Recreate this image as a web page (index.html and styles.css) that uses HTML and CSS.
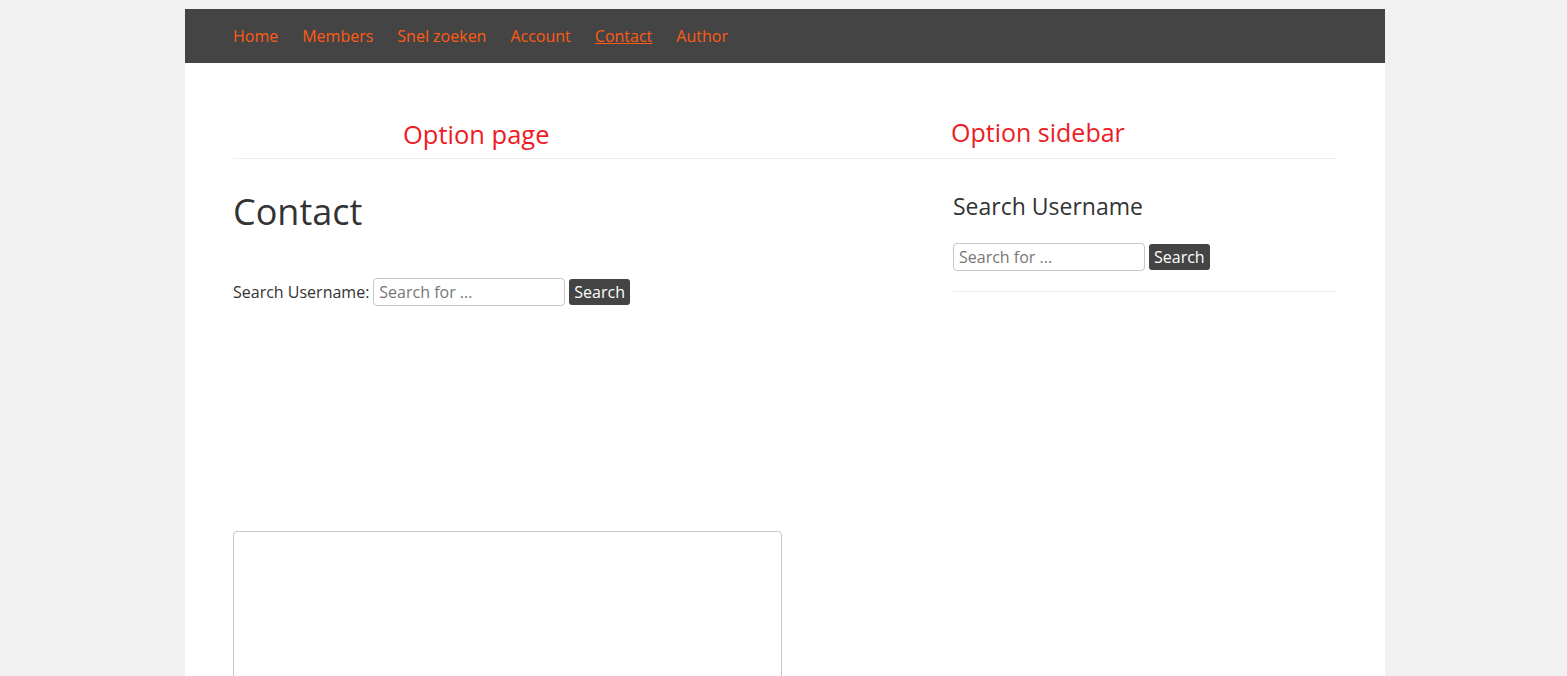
FILE: index.html
```html
<!DOCTYPE html>
<html lang="nl">
<head>
<meta charset="utf-8">
<title>Contact</title>
<link rel="stylesheet" href="styles.css">
</head>
<body>
<div class="page">
  <header class="topbar">
    <nav class="nav">
      <a href="#">Home</a>
      <a href="#">Members</a>
      <a href="#">Snel zoeken</a>
      <a href="#">Account</a>
      <a href="#" class="current">Contact</a>
      <a href="#">Author</a>
    </nav>
  </header>
  <div class="inner">
    <div class="labels">
      <div class="label label-page">Option page</div>
      <div class="label label-sidebar">Option sidebar</div>
    </div>
    <div class="columns">
      <main class="main">
        <h1 class="title">Contact</h1>
        <form class="search-form">
          <label class="search-label">Search Username:</label>
          <input class="search-input" type="text" placeholder="Search for ...">
          <button class="search-btn" type="button">Search</button>
        </form>
        <div class="frame"></div>
      </main>
      <aside class="sidebar">
        <section class="widget">
          <h2 class="widget-title">Search Username</h2>
          <form class="search-form">
            <input class="search-input" type="text" placeholder="Search for ...">
            <button class="search-btn" type="button">Search</button>
          </form>
        </section>
      </aside>
    </div>
  </div>
</div>
</body>
</html>
```
FILE: styles.css
```css
html, body {
  margin: 0;
  padding: 0;
}
body {
  background: #f1f1f1;
  font-family: "Open Sans", "Noto Sans", sans-serif;
  color: #333;
  height: 676px;
  overflow: hidden;
}
.page {
  width: 1200px;
  margin: 9px 0 0 185px;
  background: #fff;
  min-height: 700px;
}
.topbar {
  background: #444;
  height: 54px;
  padding: 0 48px;
  display: flex;
  align-items: center;
}
.nav {
  display: flex;
  gap: 24px;
}
.nav a {
  color: #ff5b14;
  text-decoration: none;
  font-size: 16px;
  line-height: 22px;
}
.nav a.current {
  text-decoration: underline;
}
.inner {
  padding: 0 49px 0 48px;
}
.labels {
  height: 96px;
  box-sizing: border-box;
  border-bottom: 1px solid #eeeeee;
  display: flex;
  align-items: flex-end;
  padding-bottom: 11px;
}
.label {
  color: #ed1c24;
  font-size: 25.5px;
  line-height: 30px;
}
.label-page {
  margin-left: 170px;
  width: 548px;
  position: relative;
  top: 2px;
}
.label-sidebar {
  font-size: 25px;
}
.columns {
  display: flex;
  justify-content: space-between;
}
.main {
  width: 672px;
}
.title {
  font-size: 36px;
  font-weight: 400;
  line-height: 48px;
  margin: 29px 0 0;
  color: #333;
}
.search-form {
  display: flex;
  align-items: center;
}
.main .search-form {
  margin-top: 42px;
}
.search-label {
  font-size: 16px;
  margin-right: 4px;
}
.search-input {
  width: 192px;
  height: 28px;
  box-sizing: border-box;
  border: 1px solid #c8c8c8;
  border-radius: 4px;
  padding: 0 5px;
  font-family: "Open Sans", "Noto Sans", sans-serif;
  font-size: 16px;
  color: #333;
  margin: 0;
}
.search-input::placeholder {
  color: #777;
}
.search-btn {
  margin-left: 4px;
  height: 26px;
  background: #444;
  color: #fff;
  border: 0;
  border-radius: 3px;
  padding: 0 5px;
  font-family: "Open Sans", "Noto Sans", sans-serif;
  font-size: 16px;
  line-height: 26px;
}
.frame {
  margin-top: 225px;
  width: 549px;
  height: 200px;
  box-sizing: border-box;
  border: 1px solid #c8c8c8;
  border-radius: 4px;
}
.sidebar {
  width: 383px;
}
.widget {
  padding-bottom: 20px;
  border-bottom: 1px solid #eeeeee;
}
.widget-title {
  font-size: 23px;
  font-weight: 400;
  line-height: 32px;
  margin: 31px 0 0;
  color: #333;
}
.widget .search-form {
  margin-top: 21px;
}
```
